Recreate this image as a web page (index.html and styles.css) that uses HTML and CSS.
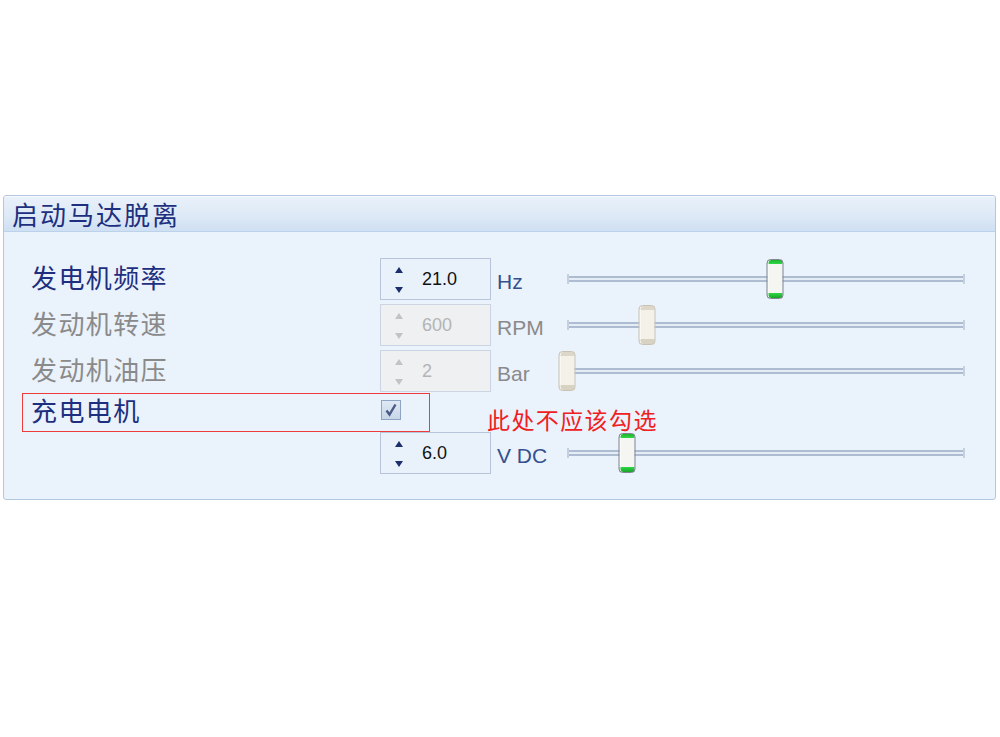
FILE: index.html
```html
<!DOCTYPE html>
<html lang="zh">
<head>
<meta charset="utf-8">
<title>启动马达脱离</title>
<link rel="stylesheet" href="styles.css">
</head>
<body>
<div class="panel">
  <div class="panel-head">启动马达脱离</div>
  <div class="panel-body">
    <div class="row">
      <div class="label">发电机频率</div>
      <div class="spin">
        <div class="arrows">
          <svg width="10" height="8" viewBox="0 0 10 8"><path d="M5 1 L9 7 L1 7 Z"/></svg>
          <svg width="10" height="8" viewBox="0 0 10 8"><path d="M1 1 L9 1 L5 7 Z"/></svg>
        </div>
        <span class="num">21.0</span>
      </div>
      <div class="unit">Hz</div>
      <div class="slider"><div class="track"></div><div class="thumb" style="left:52.3%"></div></div>
    </div>
    <div class="row off">
      <div class="label">发动机转速</div>
      <div class="spin">
        <div class="arrows">
          <svg width="10" height="8" viewBox="0 0 10 8"><path d="M5 1 L9 7 L1 7 Z"/></svg>
          <svg width="10" height="8" viewBox="0 0 10 8"><path d="M1 1 L9 1 L5 7 Z"/></svg>
        </div>
        <span class="num">600</span>
      </div>
      <div class="unit">RPM</div>
      <div class="slider"><div class="track"></div><div class="thumb" style="left:20%"></div></div>
    </div>
    <div class="row off">
      <div class="label">发动机油压</div>
      <div class="spin">
        <div class="arrows">
          <svg width="10" height="8" viewBox="0 0 10 8"><path d="M5 1 L9 7 L1 7 Z"/></svg>
          <svg width="10" height="8" viewBox="0 0 10 8"><path d="M1 1 L9 1 L5 7 Z"/></svg>
        </div>
        <span class="num">2</span>
      </div>
      <div class="unit">Bar</div>
      <div class="slider"><div class="track"></div><div class="thumb" style="left:0%"></div></div>
    </div>
    <div class="row check-row">
      <div class="mark-box">
        <div class="label">充电电机</div>
        <div class="checkbox">
          <svg width="16" height="16" viewBox="0 0 16 16"><path d="M3.5 8.5 L6.5 12.5 L12.5 2.5" fill="none" stroke="#4a5a86" stroke-width="2.4"/></svg>
        </div>
      </div>
      <div class="note">此处不应该勾选</div>
    </div>
    <div class="row">
      <div class="label"></div>
      <div class="spin">
        <div class="arrows">
          <svg width="10" height="8" viewBox="0 0 10 8"><path d="M5 1 L9 7 L1 7 Z"/></svg>
          <svg width="10" height="8" viewBox="0 0 10 8"><path d="M1 1 L9 1 L5 7 Z"/></svg>
        </div>
        <span class="num">6.0</span>
      </div>
      <div class="unit">V DC</div>
      <div class="slider"><div class="track"></div><div class="thumb" style="left:15.1%"></div></div>
    </div>
  </div>
</div>
</body>
</html>
```

FILE: styles.css
```css
html, body {
  margin: 0;
  padding: 0;
  background: #ffffff;
}

body {
  font-family: "Noto Sans CJK SC", "Liberation Sans", sans-serif;
}

.panel {
  margin: 195px 0 0 3px;
  width: 993px;
  height: 305px;
  box-sizing: border-box;
  border: 1px solid #b3c7e0;
  border-radius: 3px;
  background: #eaf2fb;
  overflow: hidden;
}

.panel-head {
  height: 36px;
  box-sizing: border-box;
  padding-left: 8px;
  border-top: 1px solid #f6f9fd;
  border-bottom: 1px solid #bcd2ea;
  background: linear-gradient(#e9f1fa 0%, #dde9f6 55%, #cfe0f3 100%);
  color: #1d2f7e;
  font-size: 26px;
  letter-spacing: 2px;
  line-height: 33px;
}

.panel-body {
  padding: 26px 0 0 27px;
}

.row {
  display: flex;
  align-items: center;
  height: 42px;
  margin-bottom: 4px;
}

.label {
  width: 349px;
  flex: none;
  color: #1d2f7e;
  font-size: 26px;
  letter-spacing: 1.4px;
  line-height: 30px;
  margin-top: -5px;
}

.spin {
  width: 111px;
  height: 42px;
  flex: none;
  box-sizing: border-box;
  border: 1px solid #b6c5da;
  background: #e9f1fa;
  display: flex;
  align-items: center;
}

.arrows {
  width: 36px;
  height: 100%;
  display: flex;
  flex-direction: column;
  justify-content: space-between;
  align-items: center;
  padding: 7px 0 5px;
  box-sizing: border-box;
}

.arrows svg {
  display: block;
  fill: #1b2f6c;
}

.num {
  margin-left: 5px;
  font-family: "Liberation Sans", sans-serif;
  font-size: 18px;
  color: #111111;
}

.unit {
  width: 70px;
  flex: none;
  margin-left: 6px;
  font-family: "Liberation Sans", sans-serif;
  font-size: 21px;
  color: #34508f;
  padding-top: 6px;
}

.slider {
  position: relative;
  width: 398px;
  height: 42px;
  flex: none;
}

.track {
  position: absolute;
  left: 0;
  right: 0;
  top: 18px;
  height: 6px;
  box-sizing: border-box;
  border-top: 2px solid #aebcd1;
  border-bottom: 2px solid #aebcd1;
  background: #e4ecf6;
}

.track::before,
.track::after {
  content: "";
  position: absolute;
  top: -4px;
  width: 2px;
  height: 10px;
  background: #c4d0e0;
}

.track::before { left: 0; }
.track::after { right: 0; }

.thumb {
  position: absolute;
  top: 1px;
  width: 17px;
  height: 40px;
  transform: translateX(-50%);
  box-sizing: border-box;
  border: 1px solid #7f858f;
  border-radius: 4px;
  background: linear-gradient(#1fb52f 0, #2fd846 4px, #f5f6f1 4px, #f5f6f1 33px, #2fd846 33px, #1aa32a 100%);
  box-shadow: inset 1px 0 0 #ffffff;
}

.off .label,
.off .unit {
  color: #8a8a8a;
}

.off .spin {
  background: #eef0f2;
  border-color: #cad4e2;
}

.off .arrows svg {
  fill: #c3c3c3;
}

.off .num {
  color: #b4b4b4;
}

.off .thumb {
  border-color: #c9c3b4;
  background: linear-gradient(#dcd7c9 0, #dcd7c9 4px, #f4f1e8 4px, #f4f1e8 33px, #d8d2c3 33px, #d8d2c3 100%);
}

.check-row {
  height: 40px;
  margin-top: -4px;
  margin-bottom: 0;
  align-items: stretch;
}

.mark-box {
  width: 408px;
  flex: none;
  margin-left: -9px;
  box-sizing: border-box;
  border: 1px solid #ee3b3b;
  padding-left: 8px;
  display: flex;
  align-items: center;
  height: 39px;
  margin-top: 1px;
}

.checkbox {
  width: 20px;
  height: 20px;
  margin-left: 1px;
  align-self: flex-start;
  margin-top: 6px;
  box-sizing: border-box;
  border: 1px solid #8fa3c3;
  background: linear-gradient(#dfe8f4, #c8d6e9);
  display: flex;
  align-items: center;
  justify-content: center;
}

.checkbox svg {
  display: block;
}

.note {
  margin-left: 57px;
  align-self: flex-end;
  color: #f0201e;
  font-size: 23px;
  letter-spacing: 1.4px;
  line-height: 26px;
  margin-bottom: 0;
}
```
